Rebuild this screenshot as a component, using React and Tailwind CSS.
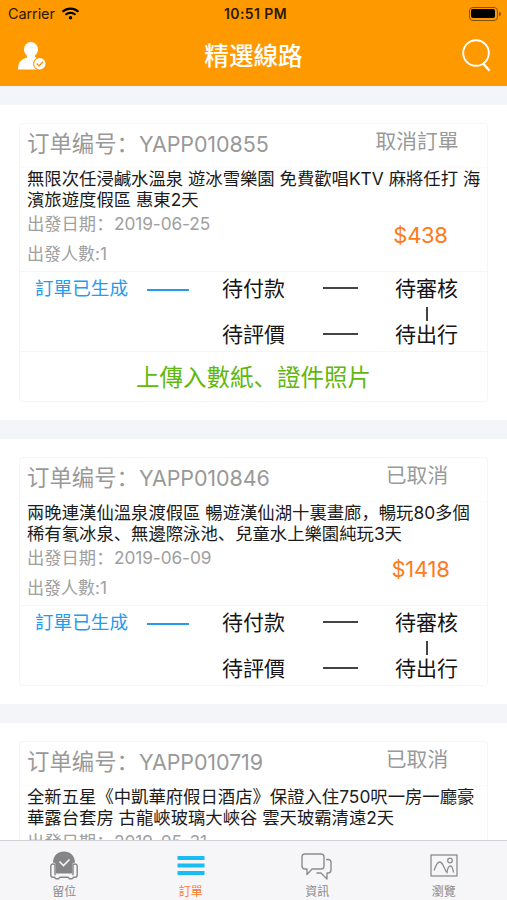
import { FaWifi } from "react-icons/fa";

const orders = [
  {
    id: "YAPP010855",
    action: "取消訂單",
    title: ["無限次任浸鹹水溫泉 遊冰雪樂園 免費歡唱KTV 麻將任打 海", "濱旅遊度假區 惠東2天"],
    date: "2019-06-25",
    people: 1,
    price: "$438",
    upload: true,
  },
  {
    id: "YAPP010846",
    action: "已取消",
    title: ["兩晚連漢仙溫泉渡假區 暢遊漢仙湖十裏畫廊，暢玩80多個", "稀有氡冰泉、無邊際泳池、兒童水上樂園純玩3天"],
    date: "2019-06-09",
    people: 1,
    price: "$1418",
  },
  {
    id: "YAPP010719",
    action: "已取消",
    title: ["全新五星《中凱華府假日酒店》保證入住750呎一房一廳豪", "華露台套房 古龍峽玻璃大峽谷 雲天玻霸清遠2天"],
    date: "2019-05-31",
  },
];

const tabs = [
  { label: "留位", icon: SeatIcon },
  { label: "訂單", icon: ListIcon, active: true },
  { label: "資訊", icon: ChatIcon },
  { label: "瀏覽", icon: GalleryIcon },
];

export default function App() {
  return (
    <div className="flex h-[900px] w-[507px] flex-col overflow-hidden bg-[#f4f5f8] font-['Inter','Noto_Sans_CJK_SC',sans-serif]">
      <header className="h-[86px] shrink-0 bg-[#ff9900]">
        <StatusBar />
        <NavBar />
      </header>

      <main className="flex min-h-0 flex-1 flex-col gap-[19px] overflow-hidden pt-[19px]">
        {orders.map((order) => (
          <OrderCard key={order.id} order={order} />
        ))}
      </main>

      <nav className="grid h-[60px] shrink-0 grid-cols-4 border-t border-[#d4d4d7] bg-[#f6f6f8] pl-px">
        {tabs.map(({ label, icon: Icon, active }) => (
          <div key={label} className="flex flex-col items-center pt-[9px]">
            <Icon />
            <span
              className={`mt-[2px] text-[12px] leading-[18px] ${
                active ? "text-[#ff7a2b]" : "text-[#8b8b8b]"
              }`}
            >
              {label}
            </span>
          </div>
        ))}
      </nav>
    </div>
  );
}

function StatusBar() {
  return (
    <div className="grid h-[27px] grid-cols-3 items-center pr-[6px] pl-[8px] text-[#2b1a00]">
      <div className="flex items-center gap-[7px]">
        <span className="text-[14.5px] leading-[20px] tracking-[-0.1px]">Carrier</span>
        <FaWifi className="h-[15px] w-[17px] text-black" />
      </div>
      <span className="pl-[2px] text-center text-[14px] leading-[20px] font-semibold tracking-[0.4px]">
        10:51 PM
      </span>
      <div className="flex items-center justify-end gap-px">
        <div className="h-[14px] w-[29px] rounded-[4px] border border-[#7d5210] p-[1.5px]">
          <div className="h-full w-full rounded-[2px] bg-black" />
        </div>
        <div className="h-[4px] w-[2px] rounded-r bg-[#7d5210]" />
      </div>
    </div>
  );
}

function NavBar() {
  return (
    <div className="flex h-[57px] items-center justify-between pr-[16px] pl-[17px]">
      <svg width="30" height="28" viewBox="0 0 30 28" fill="white">
        <ellipse cx="14" cy="7.5" rx="7" ry="7.5" />
        <path d="M10 11h8v4l4 2v10.5H1C1 20 4 17.500 10 15.500z" />
        <circle cx="22.800" cy="21.700" r="6.800" fill="#ff9900" />
        <circle cx="22.800" cy="21.700" r="5.700" />
        <path d="M19.700 21.500l2.300 2.400 4-4.100" fill="none" stroke="#ff9900" strokeWidth="1.400" />
      </svg>
      <h1 className="pt-px pr-px text-[24.600px] leading-[34px] font-medium text-white">精選線路</h1>
      <svg width="30" height="34" viewBox="0 0 30 34" fill="none" stroke="white" strokeWidth="1.900">
        <circle cx="15" cy="14" r="12.800" />
        <path d="M22 24.300l6.500 7.500" strokeWidth="2.400" />
      </svg>
    </div>
  );
}

function OrderCard({ order }) {
  return (
    <section className="shrink-0 bg-white px-[19px] py-[18px]">
      <div className="rounded-[3px] border border-[#f6f6f6]">
        <div className="flex h-[44px] justify-between border-b border-[#fafafa] pl-[7px] text-[#999]">
          <div className="flex pt-[5px] leading-[30px]">
            <span className="w-[112px] text-[22.400px]">订单编号：</span>
            <span className="text-[21.500px] tracking-[-0.1px]">{order.id}</span>
          </div>
          <span className="w-[140px] pt-[3px] text-center text-[20.800px] leading-[30px]">
            {order.action}
          </span>
        </div>

        <div className="flex h-[103px] flex-col pl-[7px]">
          <h2 className="text-[17.350px] leading-[21px] whitespace-nowrap text-[#1b1b1b]">
            {order.title.map((line) => (
              <span key={line} className="block">
                {line}
              </span>
            ))}
          </h2>
          <div className="flex justify-between text-[17.300px] text-[#a0a0a0]">
            <div>
              <p className="flex h-[28px] leading-[27px]">
                <span className="w-[87px]">出發日期：</span>
                <span className="tracking-[-0.1px]">{order.date}</span>
              </p>
              {order.people && (
                <p className="h-[32px] leading-[32px]">
                  <span className="text-[17px]">出發人數:</span>
                  {order.people}
                </p>
              )}
            </div>
            {order.price && (
              <span className="w-[133px] pt-[9px] text-center text-[22px] leading-[32px] tracking-[-0.3px] text-[#ff7a1a]">
                {order.price}
              </span>
            )}
          </div>
        </div>

        {order.price && <Progress />}

        {order.upload && (
          <div className="h-[50px] border-t border-[#f6f6f6] text-center text-[23.500px] leading-[51px] text-[#5fb810]">
            上傳入數紙、證件照片
          </div>
        )}
      </div>
    </section>
  );
}

// Шаги заказа: верхний ряд слева направо, нижний - справа налево
function Progress() {
  return (
    <div className="grid h-[80px] grid-cols-[112px_75px_100px_72px_1fr] grid-rows-[33px_14px_1fr] border-t border-[#f6f6f6] pl-[15px] text-[21px] leading-[33px] text-[#161616]">
      <span className="text-[18.600px] text-[#259bed]">訂單已生成</span>
      <span className="mt-[17px] h-[2px] w-[42px] bg-[#259bed]" />
      <span>待付款</span>
      <span className="mt-[15px] ml-px h-[2px] w-[35px] bg-[#444]" />
      <span className="pl-px">待審核</span>

      <span className="col-start-5 mt-[2px] ml-[32px] h-[14px] w-[2px] bg-[#444]" />

      <span className="col-start-3 leading-[32px]">待評價</span>
      <span className="mt-[14px] ml-px h-[2px] w-[35px] bg-[#444]" />
      <span className="pl-px leading-[32px]">待出行</span>
    </div>
  );
}

function SeatIcon() {
  return (
    <svg width="30" height="31" viewBox="0 0 30 31" fill="none">
      <path d="M4 12.500C4.500 5 9 1.500 15 1.500s10.500 3.500 11 11c-2 .2-2.700 1-2.700 2.500v8.500H6.700V15c0-1.500-.7-2.300-2.700-2.500z" fill="#858585" />
      <path
        d="M6 25.200v-9.700c0-1-1-1.500-2-1.500s-2.200.7-2.200 2v9c0 1.500.7 2.300 2.200 2.300h1.500L7 28.700h2.500l1.500-1.400h8l1.500 1.400H23l1.500-1.400H26c1.500 0 2.200-.8 2.200-2.300v-9c0-1.300-1.200-2-2.200-2s-2 .5-2 1.500v9.700"
        stroke="#858585"
        strokeWidth="1.400"
      />
      <path d="M10.500 11.500l4 4 6-6" stroke="#f6f6f8" strokeWidth="1.600" />
    </svg>
  );
}

function ListIcon() {
  return (
    <svg width="28" height="31" viewBox="0 0 28 31" fill="#19bdf2">
      <rect x=".5" y="6" width="27" height="4" />
      <rect x=".5" y="13.500" width="27" height="4" />
      <rect x=".5" y="21" width="27" height="4" />
    </svg>
  );
}

function ChatIcon() {
  return (
    <svg
      width="32"
      height="31"
      viewBox="0 0 32 31"
      fill="none"
      stroke="#8d8d8d"
      strokeWidth="1.400"
      strokeLinejoin="round"
    >
      <path d="M4 4h16c2 0 3 1 3 3v9c0 2-1 3-3 3h-9l-5 5.500V19H4c-2 0-3-1-3-3V7c0-2 1-3 3-3z" />
      <path d="M25 9.500h2c2 0 3 1 3 3V20c0 2-1 3-3 3h-1v6l-6-6h-4.500" />
    </svg>
  );
}

function GalleryIcon() {
  return (
    <svg width="28" height="31" viewBox="0 0 28 31" fill="none" stroke="#8d8d8d" strokeWidth="1.300">
      <rect x="1" y="5" width="26" height="21" />
      <circle cx="20" cy="10.500" r="2.300" />
      <path d="M4 20.500c2-5 3-8.500 5.500-8.500 4 0 4 7 7.500 10.500.5-4 2-6.500 3.500-6.500s2.500 3 3 6.500" />
    </svg>
  );
}
